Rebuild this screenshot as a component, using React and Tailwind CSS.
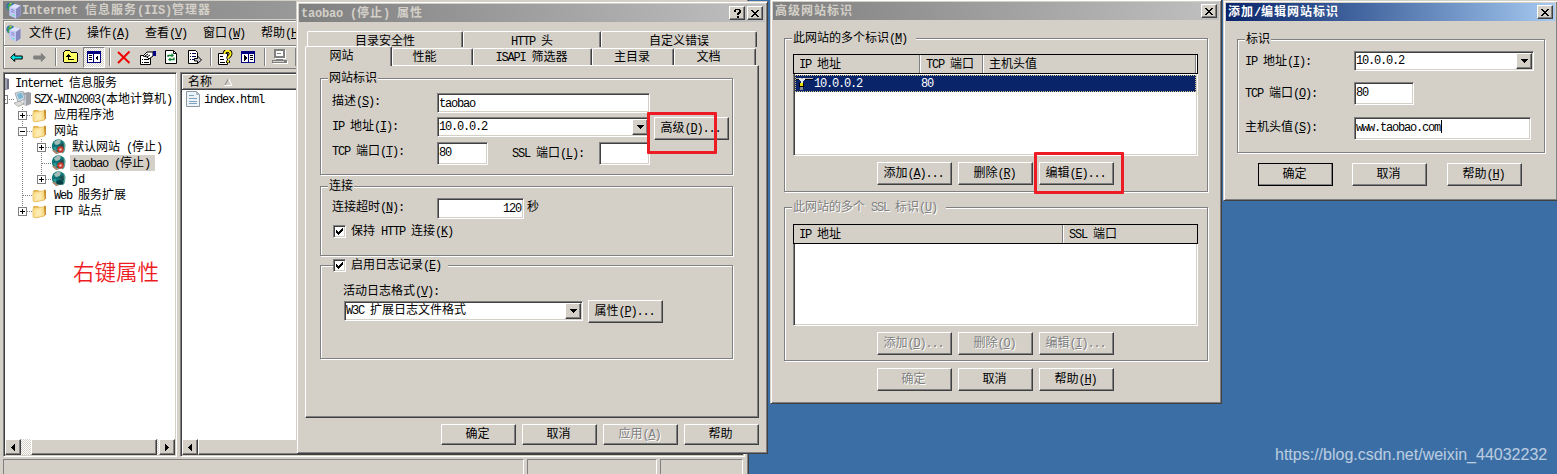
import React from "react";

/* ---------- text ---------- */
// Half-width characters advance 6px and full-width ones 12px (7/13 in captions).
// "&" marks the accelerator letter that follows it.
function T({ children, bold = false, className = "" }) {
  const runs = String(children).match(/&.|[\x20-\x25\x27-\x7e]+|[^\x20-\x7e]+/g) || [];
  const latin = bold ? "tracking-[-0.2px]" : "tracking-[-1.2px]";
  const cjk = bold ? "tracking-[1px]" : "tracking-normal";
  return (
    <span
      className={
        "block h-[14px] whitespace-pre font-['Liberation_Mono','Noto_Sans_CJK_SC',monospace] text-[12px] leading-[16px] " +
        (bold ? "font-bold " : "") + className
      }
    >
      {runs.map((r, i) =>
        r[0] === "&" ? (
          <span key={i} className={latin + " underline underline-offset-1"}>{r[1]}</span>
        ) : (
          <span key={i} className={r.charCodeAt(0) < 127 ? latin : cjk}>{r}</span>
        )
      )}
    </span>
  );
}

/* ---------- primitives ---------- */
const raised =
  "border border-t-white border-l-white border-r-[#404040] border-b-[#404040] shadow-[inset_-1px_-1px_0_#808080] bg-[#d4d0c8]";
const sunken =
  "border border-t-[#808080] border-l-[#808080] border-r-white border-b-white shadow-[inset_1px_1px_0_#404040,inset_-1px_-1px_0_#d4d0c8] bg-white";
const frame =
  "border border-t-[#d4d0c8] border-l-[#d4d0c8] border-r-[#404040] border-b-[#404040] shadow-[inset_1px_1px_0_#fff,inset_-1px_-1px_0_#808080] bg-[#d4d0c8] p-[2px]";
const dither = "bg-[repeating-conic-gradient(#fff_0_25%,#d4d0c8_0_50%)] bg-[length:2px_2px]";
const disabledText = "text-[#808080] [text-shadow:1px_1px_0_#fff]";

function Button({ children, disabled, isDefault, className = "h-[23px]" }) {
  return (
    <button
      className={
        "flex w-[75px] shrink-0 items-center justify-center pr-[2px] pb-[1px] " + raised + " " +
        (isDefault ? "outline outline-1 -outline-offset-1 outline-black " : "") +
        (disabled ? disabledText + " " : "") + className
      }
    >
      <T>{children}</T>
    </button>
  );
}

function Input({ children, caret, className = "" }) {
  return (
    <div className={"flex shrink-0 pl-[1px] pt-[2px] " + sunken + " " + className}>
      <T>{children || ""}</T>
      {caret && <span className="ml-[1px] h-[13px] w-px bg-black" />}
    </div>
  );
}

function Combo({ children, className = "" }) {
  return (
    <div className={"flex h-[20px] shrink-0 items-start pl-[1px] pt-[1px] pr-[1px] " + sunken + " " + className}>
      <T className="flex-1">{children}</T>
      <span className={"flex h-[16px] w-[16px] items-center justify-center " + raised}>
        <svg width="7" height="4" shapeRendering="crispEdges"><path d="M0 0h7v1h-1v1h-1v1h-1v1h-1v-1h-1v-1h-1v-1h-1z" /></svg>
      </span>
    </div>
  );
}

function Check({ children }) {
  return (
    <div className="flex h-[14px] items-center">
      <span className={"flex h-[13px] w-[13px] items-center justify-center " + sunken}>
        <svg width="7" height="7" shapeRendering="crispEdges"><path d="M0 2h1v1h1v1h1v-1h1v-1h1v-1h1v-1h1v3h-1v1h-1v1h-1v1h-1v1h-1v-1h-1v-1h-1z" /></svg>
      </span>
      <T className="ml-[5px]">{children}</T>
    </div>
  );
}

function Group({ legend, disabled, className = "", children, legendClass = "ml-[7px] px-[1px]" }) {
  return (
    <div className={"flex flex-col items-start border border-[#808080] shadow-[1px_1px_0_#fff,inset_1px_1px_0_#fff] " + className}>
      <div className={"-mt-[8px] h-[14px] shrink-0 bg-[#d4d0c8] " + (disabled ? disabledText + " " : "") + legendClass}>
        {typeof legend === "string" ? <T>{legend}</T> : legend}
      </div>
      {children}
    </div>
  );
}

function CaptionButton({ help }) {
  return (
    <span className={"flex h-[14px] w-[16px] items-center justify-center " + raised}>
      {help ? (
        <svg width="7" height="9" shapeRendering="crispEdges"><path d="M1 0h5v1h1v3h-1v1h-1v1h-2v-2h1v-1h1v-2h-3v2h-2v-2h1zM3 7h2v2h-2z" /></svg>
      ) : (
        <svg width="8" height="7" shapeRendering="crispEdges"><path d="M0 0h2v1h1v1h2v-1h1v-1h2v1h-1v1h-1v1h-1v1h1v1h1v1h1v1h-2v-1h-1v-1h-2v1h-1v1h-2v-1h1v-1h1v-1h1v-1h-1v-1h-1v-1h-1z" /></svg>
      )}
    </span>
  );
}

function Caption({ title, active, help, className = "" }) {
  return (
    <div
      className={
        "flex h-[18px] items-center pl-[2px] pr-[2px] " +
        (active ? "bg-linear-to-r from-[#0a246a] to-[#a6caf0] text-white " : "bg-linear-to-r from-[#808080] to-[#c0c0c0] text-[#d4d0c8] ") +
        className
      }
    >
      <T bold className="flex-1">{title}</T>
      {help && <CaptionButton help />}
      <span className="w-[2px]" />
      <CaptionButton />
    </div>
  );
}

/* ---------- icons ---------- */
function ServerGlobe({ className = "" }) {
  return (
    <svg width="16" height="17" viewBox="0 0 16 17" className={"shrink-0 " + className}>
      <circle cx="4.500" cy="4.500" r="4.200" fill="#2b6fb5" />
      <path d="M1 4l3-3 2 1-2 3zM1 6l3-1 1 2-2 1z" fill="#45b039" />
      <path d="M3 .8l3 0-1 1.500z" fill="#f0d840" />
      <path d="M3.500 5l5-3 6 1.500v10l-4.500 3-6.500-3z" fill="#b4b9ec" />
      <path d="M3.500 5l6.500 1.800v9.700l-6.500-3z" fill="#c3c8f6" />
      <path d="M5 7.500l3.500 1M5 9.500l3.500 1" stroke="#8287c4" strokeWidth=".9" />
      <path d="M10 6.800l4.500-3.300v10l-4.500 3z" fill="#8589bd" />
      <path d="M3.500 5l5-3 6 1.500-4.500 3.300z" fill="#dfe2fc" />
      <circle cx="7.500" cy="13.500" r=".8" fill="#3f9" />
    </svg>
  );
}
function Folder() {
  return (
    <svg width="15" height="15" viewBox="0 0 15 15" className="shrink-0">
      <path d="M1 3l1-1h4l1 1h5l1 1v8l-9 2-3-1z" fill="#e0b04c" />
      <path d="M12 1.500l2 .8v8l-2 2z" fill="#c8922e" />
      <path d="M.8 5l2-1.200 9-1 .7 9-9 2.200-2.500-1z" fill="#fbdf8e" stroke="#e2b75a" strokeWidth=".6" />
      <path d="M3.500 6l6-1.500v7l-6 1.500z" fill="#fdeab0" />
    </svg>
  );
}
function Globe({ stopped }) {
  return (
    <svg width="16" height="16" viewBox="0 0 16 16" className="shrink-0">
      <circle cx="7.500" cy="7" r="6.700" fill="#0d7377" />
      <path d="M3 3l4-2.500 3 1-1 3-3 1.500-2-.5z" fill="#a3bdb6" />
      <path d="M2 8l3 0 1 3-2 1z" fill="#2f9a98" />
      <path d="M8 6l5-2 1 4-3 2z" fill="#1c4f50" />
      <path d="M1 11.500l4 3.500 3-.5-5-4z" fill="#a8846a" />
      <path d="M12.500 1.500l2 4-.5 6-2 3-1.500-1 2.500-4z" fill="#5aa69e" />
      {stopped ? (
        <>
          <circle cx="9.500" cy="10.500" r="3.200" fill="#c8382a" />
          <path d="M8.500 9.500h2v2h-2z" fill="#f4dcd8" />
        </>
      ) : (
        <path d="M5 10l5-1 3 3-3 2-4-1z" fill="#063f46" />
      )}
    </svg>
  );
}
function Computer() {
  return (
    <svg width="17" height="16" viewBox="0 0 17 16" className="shrink-0">
      <path d="M9 2l6-1 2 1v11l-5 2-3-2z" fill="#9c9fa6" />
      <path d="M9 3l3 1v11l-3-2z" fill="#c9ccd2" />
      <path d="M1 2l8-2 2 8-7 3z" fill="#cfdbe2" stroke="#8a949c" strokeWidth=".7" />
      <path d="M3 3l5-1.200 1.300 5-4.500 1.500z" fill="#7ab5d4" />
      <path d="M0 12l6-2 4 3-6 2.500z" fill="#dcdcd8" stroke="#8d8d88" strokeWidth=".6" />
    </svg>
  );
}
function HtmlDoc() {
  return (
    <svg width="14" height="16" viewBox="0 0 14 16" className="shrink-0">
      <path d="M.5.5h10l3 3v12h-13z" fill="#eef3f7" stroke="#8b9aa6" />
      <path d="M10.500.5v3h3z" fill="#b9c7d2" stroke="#8b9aa6" strokeWidth=".6" />
      <path d="M3 4.500h5M3 7.500h8M3 10.500h8M3 12.500h8" stroke="#7ba3bd" />
    </svg>
  );
}
// Identity row glyph: a network tap on a cable.
function Tap() {
  return (
    <svg width="18" height="14" viewBox="0 0 18 14" shapeRendering="crispEdges" className="shrink-0">
      <path d="M0 2h17v2h-17z" fill="#000" />
      <path d="M0 2h17v1h-17z" fill="#b8b8b8" />
      <path d="M3 2h2v1h2v-1h2v2h-1v1h-1v2h-2v-2h-1v-1h-1z" fill="#e8e8e8" />
      <path d="M3 7h5v4h-5z" fill="#000" />
      <path d="M4 7h3v3h-3z" fill="#e8e000" />
      <path d="M4 11h3v3h-3z" fill="#888" />
    </svg>
  );
}

const ToolArrow = ({ flip, fill, stroke }) => (
  <svg width="13" height="11" viewBox="0 0 13 11" className={flip ? "scale-x-[-1]" : ""}>
    <path d="M.7 5.500l4-4v2.500h7.500v3h-7.500v2.500z" fill={fill} stroke={stroke} />
  </svg>
);
const UpFolder = () => (
  <svg width="16" height="14" viewBox="0 0 16 14" shapeRendering="crispEdges">
    <path d="M2 0h5v1h1v1h6v1h1v9h-1v1h-13v-1h-1v-10h1v-1h1z" fill="#000" />
    <path d="M2 1h5v1h1v1h6v9h-13v-10h1z" fill="#ffff66" />
    <path d="M5 4h1v1h1v1h1v1h-2v2h5v1h-6v-3h-2v-1h1v-1h1z" fill="#000" />
  </svg>
);
const Panel = ({ right }) => (
  <svg width="14" height="12" viewBox="0 0 14 12" shapeRendering="crispEdges">
    <path d="M0 0h14v12h-14z" fill="#000080" />
    {right ? (
      <>
        <path d="M1 3h6v8h-6zM8 3h5v8h-5z" fill="#fff" />
        <path d="M3 4l3 3-3 3zM9 4h3v1h-3zM9 6h3v1h-3zM9 8h3v1h-3z" fill="#000" />
      </>
    ) : (
      <>
        <path d="M1 3h5v8h-5zM7 3h6v8h-6z" fill="#fff" />
        <path d="M11 4v6l-3-3zM2 4h3v1h-3zM2 6h3v1h-3zM2 8h3v1h-3z" fill="#000" />
      </>
    )}
  </svg>
);
const Delete = () => (
  <svg width="14" height="13" viewBox="0 0 14 13">
    <path d="M1 1l11.500 11M12.500 .5L1 12" stroke="#f00000" strokeWidth="2" />
  </svg>
);
const Props = () => (
  <svg width="17" height="15" viewBox="0 0 17 15">
    <path d="M.5 5.500h10v9h-10z" fill="#fff" stroke="#000" />
    <path d="M2 9.500h1M4 9.500h5M2 12.500h1M4 12.500h5" stroke="#000" />
    <path d="M3 6l4-4h6v4l-4 3-2-2z" fill="#fff" stroke="#000" />
    <path d="M5 6l3-2M7 7l3-2" stroke="#000" />
    <path d="M13 1h3v5h-3z" fill="#000080" />
  </svg>
);
const Refresh = () => (
  <svg width="13" height="14" viewBox="0 0 13 14">
    <path d="M.5.5h8l3 3v10h-11z" fill="#fff" stroke="#000" />
    <path d="M8.500.5v3h3" fill="none" stroke="#000" />
    <path d="M3 7v-1.500h4M9 7.500v2h-4" fill="none" stroke="#108030" strokeWidth="1.300" />
    <path d="M6.500 3l2.500 2.500-2.500 2zM5.500 7.500v4l-2.500-2z" fill="#108030" />
  </svg>
);
const Export = () => (
  <svg width="15" height="14" viewBox="0 0 15 14">
    <path d="M.5.5h7l2 2v11h-9z" fill="#fff" stroke="#000" />
    <path d="M2 3.500h1M4 3.500h4M2 6.500h1M4 6.500h4M2 9.500h1M4 9.500h3" stroke="#00004c" />
    <path d="M6.500 8.500h3v-2.500l4 4-4 3.500v-2.500h-3z" fill="#c8c8d0" stroke="#000" />
  </svg>
);
const Help = () => (
  <svg width="15" height="15" viewBox="0 0 15 15">
    <path d="M.5 3.500h9v11h-9z" fill="#fff" stroke="#000" />
    <path d="M2 6.500h3M2 9.500h4M2 12.500h5" stroke="#000" />
    <path d="M6.500 4c0-4.500 6.500-4 6 0 0 2-2.500 2.500-2.500 4.500M10 10.500v2.500" fill="none" stroke="#000" strokeWidth="3.800" />
    <path d="M6.500 4c0-4.500 6.500-4 6 0 0 2-2.500 2.500-2.500 4.500M10 10.500v2" fill="none" stroke="#ffee20" strokeWidth="2" />
  </svg>
);
const GreyPc = () => (
  <svg width="17" height="16" viewBox="0 0 17 16" shapeRendering="crispEdges">
    <path d="M3 1h11v9h-11zM1 12h15v3h-15z" fill="#fff" />
    <path d="M2 0h11v9h-11zM4 2v5h7v-5z" fillRule="evenodd" fill="#808080" />
    <path d="M5 4h4v1h-4zM4 10h7v1h-7zM0 11h15v3h-15z" fill="#808080" />
    <path d="M1 12h11v1h-11z" fill="#d4d0c8" />
  </svg>
);

/* ---------- console window ---------- */
const Sep = ({ className = "" }) => <span className={"h-[18px] w-[2px] shrink-0 border-l border-[#808080] bg-white " + className} />;

function Branch({ box, end, blank }) {
  return (
    <svg width="19" height="16" viewBox="0 0 19 16" shapeRendering="crispEdges" className="shrink-0">
      <path d={end ? "M9.500 0V8" : "M9.500 0V16"} stroke="#808080" strokeDasharray="1 1" />
      {!blank && <path d="M10 8.500H19" stroke="#808080" strokeDasharray="1 1" />}
      {box && (
        <>
          <path d="M5.500 4.500h8v8h-8z" fill="#fff" stroke="#808080" />
          <path d="M7 8.500h5" stroke="#000" />
          {box === "+" && <path d="M9.500 6v5" stroke="#000" />}
        </>
      )}
    </svg>
  );
}

function Arrow({ right }) {
  return (
    <span className={"flex h-[16px] w-[16px] shrink-0 items-center justify-center " + raised}>
      <svg width="4" height="7" shapeRendering="crispEdges" className={right ? "scale-x-[-1]" : ""}><path d="M4 0v7h-1v-1h-1v-1h-1v-1h-1v-1h1v-1h1v-1h1v-1z" /></svg>
    </span>
  );
}

const statusCell = "border border-[#808080] border-b-white border-r-white";

function Console() {
  const menus = ["文件(&F)", "操作(&A)", "查看(&V)", "窗口(&W)", "帮助(&H)"];
  return (
    <div className="absolute left-0 top-[-2px] flex h-[490px] w-[749px] flex-col border-r border-[#404040] bg-[#d4d0c8] pl-[3px] pt-[3px] shadow-[inset_-1px_0_0_#808080]">
      <div className="flex h-[18px] w-[742px] shrink-0 items-center bg-linear-to-r from-[#808080] to-[#c0c0c0] pl-[3px] text-[#d4d0c8]">
        <ServerGlobe />
        <T bold>Internet 信息服务(IIS)管理器</T>
      </div>
      <div className="mt-px flex h-[25px] w-[742px] shrink-0 items-center border-l border-t border-[#808080] pl-[2px] shadow-[inset_1px_1px_0_#fff]">
        <ServerGlobe />
        <div className="ml-[7px] flex">
          {menus.map((m) => (
            <div key={m} className="w-[58px]"><T>{m}</T></div>
          ))}
        </div>
      </div>
      <div className="flex h-[24px] w-[742px] shrink-0 items-center border-y border-l border-[#808080] shadow-[inset_1px_1px_0_#fff]">
        <span className="ml-[6px] flex w-[13px]"><ToolArrow fill="#00e5e5" stroke="#000" /></span>
        <span className="ml-[10px] flex w-[13px]"><ToolArrow flip fill="#808080" stroke="#808080" /></span>
        <Sep className="ml-[9px]" />
        <span className="ml-[6px]"><UpFolder /></span>
        <span className={"ml-[4px] flex h-[21px] w-[22px] items-center justify-center border border-b-white border-r-white border-l-[#808080] border-t-[#808080] " + dither}><Panel /></span>
        <Sep className="ml-[4px]" />
        <span className="ml-[6px]"><Delete /></span>
        <span className="ml-[9px]"><Props /></span>
        <span className="ml-[8px]"><Refresh /></span>
        <span className="ml-[10px]"><Export /></span>
        <Sep className="ml-[7px]" />
        <span className="ml-[6px]"><Help /></span>
        <span className="ml-[8px]"><Panel right /></span>
        <Sep className="ml-[9px]" />
        <span className="ml-[6px]"><GreyPc /></span>
        <Sep className="ml-[6px]" />
      </div>
      <div className="mt-[3px] flex h-[385px] w-[742px] shrink-0">
        <div className={"flex w-[174px] flex-col overflow-hidden p-[1px] " + sunken}>
          <div className="flex flex-1 flex-col pt-[1px]">
            <div className="flex h-[16px] items-center">
              <svg width="5" height="14" className="shrink-0"><path d="M0 2l4 1v10l-4 1z" fill="#6e6f80" /><path d="M0 3h2v10h-2z" fill="#a0a1b0" /></svg>
              <T className="ml-[5px]">Internet 信息服务</T>
            </div>
            <div className="flex h-[16px] items-center">
              <svg width="9" height="16" shapeRendering="crispEdges" className="shrink-0"><path d="M0 4.500h2.500v8h-2.500M0 8.500h1" fill="none" stroke="#808080" /><path d="M4 8.500h5" stroke="#808080" strokeDasharray="1 1" /></svg>
              <Computer />
              <T className="ml-[3px]">SZX-WIN2003(本地计算机)</T>
            </div>
            <div className="flex h-[16px] items-center pl-[8px]"><Branch box="+" /><Folder /><T className="ml-[7px]">应用程序池</T></div>
            <div className="flex h-[16px] items-center pl-[8px]"><Branch box="-" /><Folder /><T className="ml-[7px]">网站</T></div>
            <div className="flex h-[16px] items-center pl-[8px]"><Branch blank /><Branch box="+" /><Globe stopped /><T className="ml-[5px]">默认网站 (停止)</T></div>
            <div className="flex h-[16px] items-center pl-[8px]"><Branch blank /><Branch /><Globe stopped /><span className="ml-[3px] flex h-[16px] w-[85px] items-center bg-[#d4d0c8] pl-[2px]"><T>taobao (停止)</T></span></div>
            <div className="flex h-[16px] items-center pl-[8px]"><Branch blank /><Branch box="+" end /><Globe /><T className="ml-[5px]">jd</T></div>
            <div className="flex h-[16px] items-center pl-[8px]"><Branch /><Folder /><T className="ml-[7px]">Web 服务扩展</T></div>
            <div className="flex h-[16px] items-center pl-[8px]"><Branch box="+" end /><Folder /><T className="ml-[7px]">FTP 站点</T></div>
            <div className="mt-[39px] pl-[68px] font-['Noto_Sans_CJK_SC',sans-serif] text-[21.5px] font-[350] leading-[26px] text-[#ed1c24]">右键属性</div>
          </div>
          <div className={"flex h-[16px] " + dither}>
            <Arrow />
            <span className={"ml-[10px] mr-[2px] flex-1 " + raised} />
            <Arrow right />
          </div>
        </div>
        <div className={"ml-[3px] flex flex-1 flex-col p-[1px] " + sunken}>
          <div className="flex h-[16px] items-center border-b border-[#404040] bg-[#d4d0c8] pl-[6px] shadow-[inset_1px_1px_0_#fff,inset_0_-1px_0_#808080]">
            <T>名称</T>
            <svg width="9" height="8" className="ml-[12px]"><path d="M4.500.5L1 7" stroke="#808080" fill="none" /><path d="M4.500.5L8 7.500H.5" stroke="#fff" fill="none" /></svg>
          </div>
          <div className="flex h-[17px] items-center pl-[4px]"><HtmlDoc /><T className="ml-[4px]">index.html</T></div>
          <div className="flex-1" />
          <div className="flex h-[16px]"><Arrow /><span className={"flex-1 " + raised} /></div>
        </div>
      </div>
      <div className="mt-[2px] flex h-[26px] shrink-0 gap-[3px]">
        <span className={"w-[521px] " + statusCell} />
        <span className={"w-[130px] " + statusCell} />
        <span className={"w-[83px] " + statusCell} />
      </div>
    </div>
  );
}

/* ---------- properties dialog ---------- */
const tabEdge = "flex items-center justify-center rounded-t-[2px] border border-b-0 border-l-white border-t-white border-r-[#404040] bg-[#d4d0c8] shadow-[inset_-1px_0_0_#808080]";
const Label = ({ children, className = "" }) => <div className={"shrink-0 " + className}><T>{children}</T></div>;

function Properties() {
  return (
    <div className={"absolute left-[296px] top-[1px] flex h-[453px] w-[472px] flex-col " + frame}>
      <Caption title="taobao (停止) 属性" help className="shrink-0" />
      <div className="ml-[8px] mt-[9px] flex h-[16px] shrink-0">
        <div className={"w-[156px] pt-[2px] " + tabEdge}><T>目录安全性</T></div>
        <div className={"w-[138px] pt-[2px] " + tabEdge}><T>HTTP 头</T></div>
        <div className={"w-[156px] pt-[2px] " + tabEdge}><T>自定义错误</T></div>
      </div>
      <div className="-mt-px ml-[6px] flex h-[20px] shrink-0 items-start">
        <div className={"relative z-10 h-[20px] w-[87px] pb-[1px] pr-[14px] " + tabEdge}><T>网站</T></div>
        <div className={"mt-[2px] h-[17px] w-[81px] pr-[16px] " + tabEdge}><T>性能</T></div>
        <div className={"mt-[2px] h-[17px] w-[119px] pr-[2px] " + tabEdge}><T>ISAPI 筛选器</T></div>
        <div className={"mt-[2px] h-[17px] w-[82px] pr-[2px] " + tabEdge}><T>主目录</T></div>
        <div className={"mt-[2px] h-[17px] w-[82px] pr-[13px] " + tabEdge}><T>文档</T></div>
      </div>
      <div className={"-mt-px ml-[6px] flex h-[353px] w-[454px] shrink-0 flex-col pl-[14px] pt-[12px] " + raised}>
        <Group legend="网站标识" className="h-[97px] w-[413px]">
          <div className="mt-[8px] flex h-[21px]">
            <Label className="w-[116px] pl-[11px] pt-[1px]">描述(&S):</Label>
            <Input className="h-[20px] w-[213px]">taobao</Input>
          </div>
          <div className="mt-[3px] flex h-[21px]">
            <Label className="w-[116px] pl-[11px] pt-[2px]">IP 地址(&I):</Label>
            <Combo className="w-[213px]">10.0.0.2</Combo>
            <div className="ml-[4px]"><Button>高级(&D)...</Button></div>
          </div>
          <div className="mt-[4px] flex h-[23px]">
            <Label className="w-[116px] pl-[11px] pt-[2px]">TCP 端口(&T):</Label>
            <Input className="h-[23px] w-[51px]">80</Input>
            <Label className="ml-[24px] w-[87px] pt-[4px]">SSL 端口(&L):</Label>
            <Input className="h-[23px] w-[51px]" />
          </div>
        </Group>
        <Group legend="连接" className="mt-[11px] h-[70px] w-[413px]">
          <div className="mt-[5px] flex h-[21px]">
            <Label className="w-[116px] pl-[11px] pt-[2px]">连接超时(&N):</Label>
            <Input className="h-[21px] w-[87px] justify-end pr-[2px]">120</Input>
            <Label className="ml-[3px] pt-[2px]">秒</Label>
          </div>
          <div className="ml-[12px] mt-[5px]"><Check>保持 HTTP 连接(&K)</Check></div>
        </Group>
        <Group legend={<Check>启用日志记录(&E)</Check>} legendClass="ml-[12px] pr-[7px]" className="mt-[9px] h-[94px] w-[413px]">
          <Label className="ml-[22px] mt-[12px] h-[14px]">活动日志格式(&V):</Label>
          <div className="ml-[23px] mt-[2px] flex">
            <Combo className="mt-px w-[239px]">W3C 扩展日志文件格式</Combo>
            <div className="ml-[5px]"><Button>属性(&P)...</Button></div>
          </div>
        </Group>
      </div>
      <div className="ml-[142px] mt-[6px] flex gap-[6px]">
        <Button className="h-[21px]">确定</Button>
        <Button className="h-[21px]">取消</Button>
        <Button className="h-[21px]" disabled>应用(&A)</Button>
        <Button className="h-[21px]">帮助</Button>
      </div>
      <div className="absolute left-[350px] top-[110px] h-[42px] w-[70px] rounded-[1px] border-[3px] border-[#ed1c24]" />
    </div>
  );
}

/* ---------- advanced identification dialog ---------- */
const col = "flex items-center border-r border-[#808080] shadow-[1px_0_0_#fff]";

function Advanced() {
  return (
    <div className={"absolute left-[770px] top-[-1px] flex h-[405px] w-[452px] flex-col " + frame}>
      <Caption title="高级网站标识" className="shrink-0" />
      <Group legend="此网站的多个标识(&M)" legendClass="ml-[7px] pl-[1px] pr-[9px]" className="ml-[11px] mt-[18px] h-[154px] w-[424px]">
        <div className={"ml-[8px] mt-[9px] flex h-[102px] w-[405px] flex-col " + sunken}>
          <div className="-mx-px -mt-px flex h-[20px] shrink-0 border border-black bg-[#d4d0c8]">
            <div className={"w-[126px] pl-[5px] " + col}><T>IP 地址</T></div>
            <div className={"w-[63px] pl-[6px] " + col}><T>TCP 端口</T></div>
            <div className={"w-[213px] pl-[6px] " + col}><T>主机头值</T></div>
          </div>
          <div className="ml-[1px] mt-[1px] flex h-[17px] w-[401px] items-center border border-dotted border-[#d9c58c] bg-[#0a246a] pb-px text-white">
            <Tap />
            <T className="w-[107px]">10.0.0.2</T>
            <T>80</T>
          </div>
        </div>
        <div className="ml-[92px] mt-[6px] flex gap-[6px]">
          <Button>添加(&A)...</Button><Button>删除(&R)</Button><Button>编辑(&E)...</Button>
        </div>
      </Group>
      <Group disabled legend="此网站的多个 SSL 标识(&U)" legendClass="ml-[7px] pl-[1px] pr-[9px]" className="ml-[11px] mt-[15px] h-[154px] w-[424px]">
        <div className={"ml-[8px] mt-[10px] flex h-[102px] w-[405px] flex-col " + sunken}>
          <div className="-mx-px -mt-px flex h-[20px] shrink-0 border border-black bg-[#d4d0c8]">
            <div className={"w-[269px] pl-[5px] " + col}><T>IP 地址</T></div>
            <div className="flex items-center pl-[6px]"><T>SSL 端口</T></div>
          </div>
        </div>
        <div className="ml-[92px] mt-[6px] flex gap-[6px]">
          <Button disabled>添加(&D)...</Button><Button disabled>删除(&O)</Button><Button disabled>编辑(&I)...</Button>
        </div>
      </Group>
      <div className="ml-[104px] mt-[7px] flex gap-[6px]">
        <Button disabled>确定</Button><Button>取消</Button><Button>帮助(&H)</Button>
      </div>
      <div className="absolute left-[263px] top-[152px] h-[42px] w-[90px] rounded-[1px] border-[3px] border-[#ed1c24]" />
    </div>
  );
}

/* ---------- add / edit dialog ---------- */
function Edit() {
  return (
    <div className={"absolute left-[1223px] top-0 flex h-[201px] w-[335px] flex-col " + frame}>
      <Caption title="添加/编辑网站标识" active className="shrink-0" />
      <Group legend="标识" className="ml-[11px] mt-[18px] h-[114px] w-[308px]">
        <div className="mt-[5px] flex h-[20px]">
          <Label className="w-[116px] pl-[7px] pt-[3px]">IP 地址(&I):</Label>
          <Combo className="w-[180px]">10.0.0.2</Combo>
        </div>
        <div className="mt-[11px] flex h-[23px]">
          <Label className="w-[116px] pl-[7px] pt-[4px]">TCP 端口(&O):</Label>
          <Input className="h-[23px] w-[60px]">80</Input>
        </div>
        <div className="mt-[12px] flex h-[23px]">
          <Label className="w-[116px] pl-[7px] pt-[3px]">主机头值(&S):</Label>
          <Input caret className="h-[23px] w-[177px]">www.taobao.com</Input>
        </div>
      </Group>
      <div className="ml-[32px] mt-[10px] flex">
        <Button isDefault>确定</Button>
        <div className="ml-[19px]"><Button>取消</Button></div>
        <div className="ml-[20px]"><Button>帮助(&H)</Button></div>
      </div>
    </div>
  );
}

export default function App() {
  return (
    <div className="relative h-[474px] w-[1557px] overflow-hidden bg-[#3a6ea5] text-black">
      <Console />
      <Properties />
      <Advanced />
      <Edit />
      <div className="absolute left-[1275px] top-[445px] whitespace-nowrap font-['Liberation_Sans',sans-serif] text-[16px] leading-[20px] text-white/65">
        https://blog.csdn.net/weixin_44032232
      </div>
    </div>
  );
}
